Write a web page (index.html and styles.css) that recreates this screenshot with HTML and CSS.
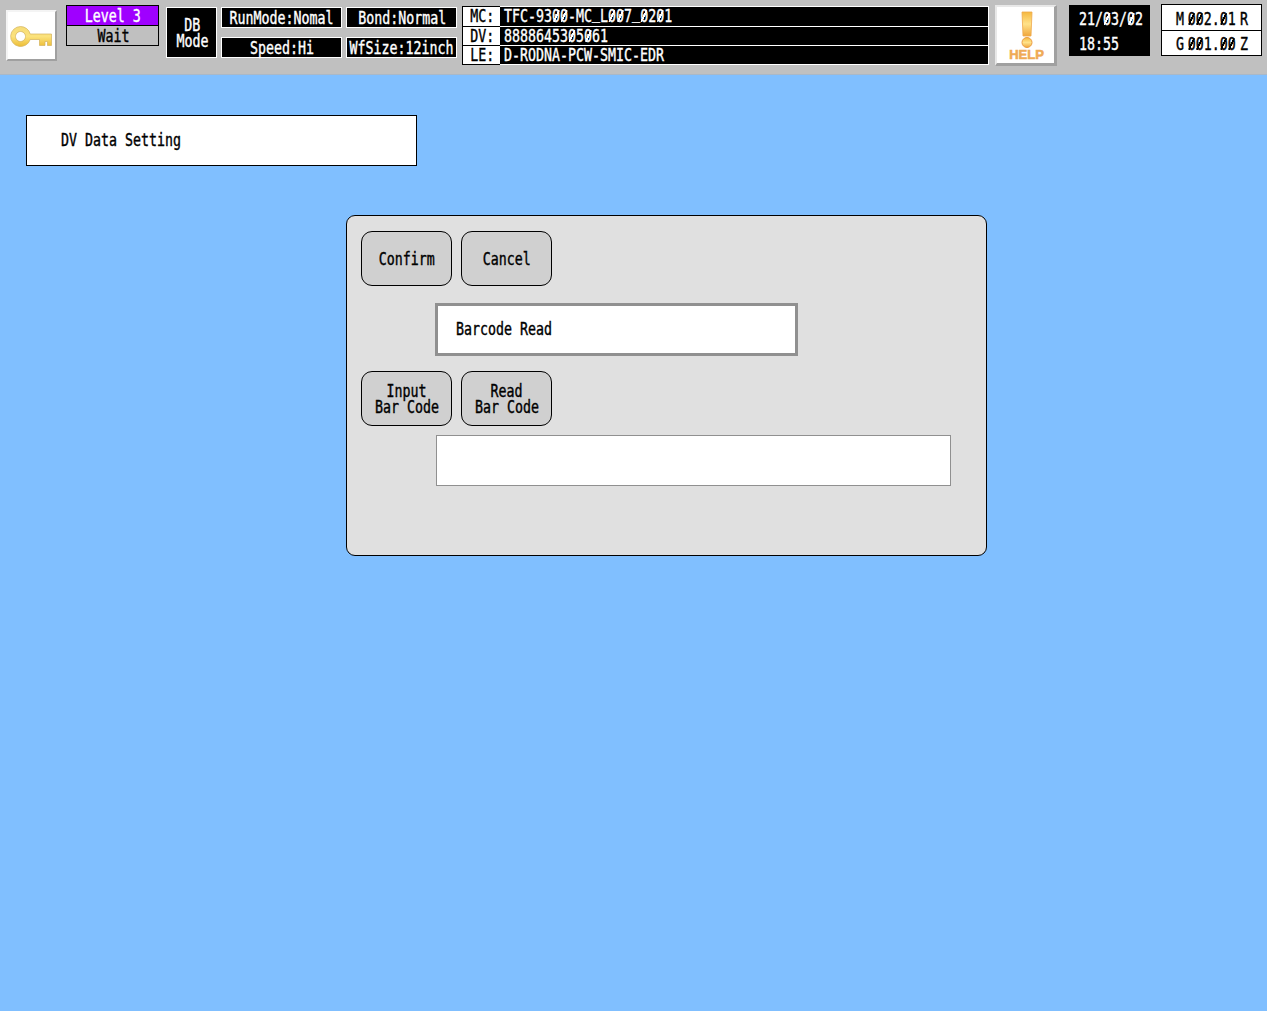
FILE: index.html
```html
<!DOCTYPE html>
<html lang="en">
<head>
<meta charset="utf-8">
<title>DV Data Setting</title>
<link rel="stylesheet" href="styles.css">
</head>
<body>
<header class="topbar">
  <button class="key" aria-label="Key">
    <svg width="47" height="47" viewBox="0 0 47 47">
      <defs><linearGradient id="gold" x1="0" y1="0" x2="0" y2="1"><stop offset="0" stop-color="#f6dc78"/><stop offset=".5" stop-color="#fbe27c"/><stop offset="1" stop-color="#edbd35"/></linearGradient></defs>
      <path fill="url(#gold)" stroke="#d3b25c" stroke-width=".7" fill-rule="evenodd" d="M12.500 14.500a10 10 0 0 1 9.700 7.500H43.500v11.500h-4v-4h-2.500v4h-5.500v-6H22.200A10 10 0 1 1 12.500 14.500zM12.500 19.500a5 5 0 1 0 .01 0z"/>
    </svg>
  </button>
  <div class="status"><div class="level"><span class="t">Level 3</span></div><div class="wait"><span class="t">Wait</span></div></div>
  <div class="mode"><span class="t">DB</span><span class="t">Mode</span></div>
  <div class="settings">
    <div class="tag"><span class="t">RunMode:Nomal</span></div><div class="tag"><span class="t">Bond:Normal</span></div>
    <div class="tag"><span class="t">Speed:Hi</span></div><div class="tag"><span class="t">WfSize:12inch</span></div>
  </div>
  <div class="files">
    <div class="label first"><span class="t">MC:</span></div><div class="value first"><span class="t left">TFC-93<i>0</i><i>0</i>-MC<b>_</b>L<i>0</i><i>0</i>7<b>_</b><i>0</i>2<i>0</i>1</span></div>
    <div class="label"><span class="t">DV:</span></div><div class="value"><span class="t left">88886453<i>0</i>5<i>0</i>61</span></div>
    <div class="label"><span class="t">LE:</span></div><div class="value"><span class="t left">D-RODNA-PCW-SMIC-EDR</span></div>
  </div>
  <button class="help">
    <svg width="24" height="37" viewBox="0 0 24 37">
      <defs><linearGradient id="orange" x1="0" y1="0" x2="0" y2="1"><stop offset="0" stop-color="#f5b83f"/><stop offset=".5" stop-color="#ffe28a"/><stop offset="1" stop-color="#f0a63c"/></linearGradient></defs>
      <path fill="url(#orange)" stroke="#efa84a" stroke-width=".8" d="M7 1h10l-1 24H8z"/><circle cx="12" cy="31.500" r="5" fill="url(#orange)" stroke="#ec9d43"/>
    </svg>
    <span class="help-text">HELP</span>
  </button>
  <div class="clock"><span class="t left">21/<i>0</i>3/<i>0</i>2</span><span class="t left">18:55</span></div>
  <div class="counters">
    <div class="counter"><span class="c1"><span class="t">M</span></span><span class="c6"><span class="t"><i>0</i><i>0</i>2.<i>0</i>1</span></span><span class="c1"><span class="t">R</span></span></div>
    <div class="counter"><span class="c1"><span class="t">G</span></span><span class="c6"><span class="t"><i>0</i><i>0</i>1.<i>0</i><i>0</i></span></span><span class="c1"><span class="t">Z</span></span></div>
  </div>
</header>
<main>
  <h1 class="title"><span class="t left">DV Data Setting</span></h1>
  <section class="panel">
    <div class="buttons"><button class="btn"><span class="t">Confirm</span></button><button class="btn"><span class="t">Cancel</span></button></div>
    <div class="message"><span class="t left">Barcode Read</span></div>
    <div class="buttons"><button class="btn"><span class="t">Input</span><span class="t">Bar Code</span></button><button class="btn"><span class="t">Read</span><span class="t">Bar Code</span></button></div>
    <input class="barcode" aria-label="Bar code">
  </section>
</main>
</body>
</html>
```
FILE: styles.css
```css
* { box-sizing: border-box; }
body { margin: 0; min-height: 1011px; background: #80bfff; color: #000; font: 17px/16px "DejaVu Sans Mono", monospace; }
button { padding: 0; font: inherit; color: inherit; }

/* Condensed terminal lettering on an 8px character pitch */
.t { display: block; flex: none; height: 16px; white-space: pre; transform: scaleX(.7817); -webkit-text-stroke: .4px currentColor; }
.left { transform-origin: left; }
/* Slashed zero */
.t i { font-style: normal; background: linear-gradient(to bottom right, transparent 42%, currentColor 42% 58%, transparent 58%) no-repeat center 4px / 8px 12px; }
/* Underscore sits on the baseline */
.t b { display: inline-block; height: 12px; font-weight: normal; vertical-align: 3px; line-height: 12px; }

.topbar { display: flex; align-items: flex-start; height: 75px; background: #c0c0c0; border-bottom: 1px solid #a9b8c8; }
.key { display: flex; flex: none; width: 51px; height: 51px; margin: 10px 0 0 6px; background: #fff; border: 2px solid; border-color: #f4f4f4 #a0a0a0 #a0a0a0 #f4f4f4; }
.status { flex: none; width: 93px; height: 41px; margin: 5px 0 0 9px; border: 1px solid #000; }
.level, .wait { display: flex; justify-content: center; align-items: center; }
.level { height: 20px; padding-left: 1px; background: #9f00ff; color: #fff; border-bottom: 1px solid #000; }
.wait { height: 19px; padding: 1px 0 0 1px; }
.mode { display: flex; flex: none; flex-direction: column; align-items: center; justify-content: center; width: 51px; height: 51px; margin: 7px 0 0 7px; padding-left: 1px; background: #000; color: #fff; border: 1px solid #fff; }
.settings { display: grid; flex: none; grid-template: 21px 21px / 121px 111px; gap: 9px 4px; margin: 7px 0 0 4px; }
.tag { display: flex; align-items: center; justify-content: center; padding-left: 1px; background: #000; color: #fff; border: 1px solid #fff; }
.files { display: grid; flex: none; grid-template: 21px 19px 19px / 38px 489px; margin: 6px 0 0 5px; }
.label, .value { display: flex; align-items: flex-start; padding-top: 1px; }
.label { justify-content: center; padding-left: 1px; background: #fff; border: solid #000; border-width: 0 0 1px 1px; }
.value { padding-left: 4px; background: #000; color: #fff; border: solid #fff; border-width: 0 1px 1px 0; }
.label.first, .value.first { border-top-width: 1px; }
.value.first { padding-top: 0; }
.help { display: flex; flex: none; flex-direction: column; align-items: center; width: 62px; height: 61px; margin: 5px 0 0 6px; padding: 4px 0 0 2px; background: #fff; border: solid; border-width: 2px 3px 3px 2px; border-color: #e8e8e8 #a0a0a0 #a0a0a0 #e8e8e8; }
.help svg { flex: none; }
.help-text { margin-top: 1px; font: bold 13px/12px "Liberation Sans", Arial, sans-serif; color: #efaa55; -webkit-text-stroke: .6px #efaa55; }
.clock { display: flex; flex: none; flex-direction: column; gap: 9px; width: 81px; height: 51px; margin: 5px 0 0 12px; padding: 6px 0 0 10px; background: #000; color: #fff; }
.counters { flex: none; width: 101px; height: 52px; margin: 4px 0 0 11px; background: #fff; border: 1px solid #000; }
.counter { display: flex; align-items: center; justify-content: center; gap: 4px; height: 25px; padding: 1px 0 0 1px; }
.counter:first-child { height: 26px; padding-top: 3px; border-bottom: 1px solid #000; }
.c1, .c6 { display: flex; justify-content: center; width: 8px; }
.c6 { width: 48px; }

main { padding: 40px 26px; }
.title { display: flex; align-items: center; width: 391px; height: 51px; margin: 0; padding: 0 0 2px 34px; background: #fff; border: 1px solid #000; font: inherit; }
.panel { width: 641px; height: 341px; margin: 49px 0 0 320px; padding: 15px 14px; background: #e0e0e0; border: 1px solid #000; border-radius: 9px; }
.buttons { display: flex; gap: 9px; }
.btn { display: flex; flex-direction: column; align-items: center; justify-content: center; width: 91px; height: 55px; background: #d0d0d0; border: 1px solid #000; border-radius: 11px; }
.message { display: flex; align-items: center; width: 363px; height: 53px; margin: 17px 0 15px 74px; padding: 0 0 2px 18px; background: #fff; border: 3px solid #909090; }
.barcode { display: block; width: 515px; height: 51px; margin: 9px 0 0 75px; padding: 0 18px; background: #fff; border: 1px solid #909090; border-radius: 0; font: inherit; }
```
